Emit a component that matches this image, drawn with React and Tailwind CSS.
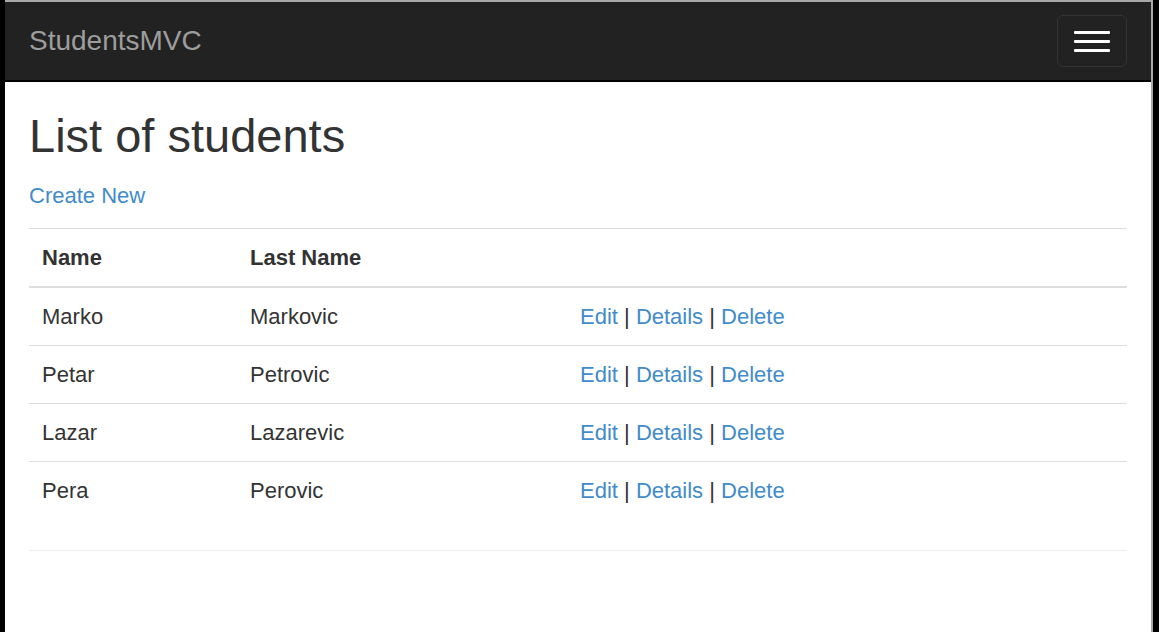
export default function App() {
  const rows = [
    ["Marko", "Markovic"],
    ["Petar", "Petrovic"],
    ["Lazar", "Lazarevic"],
    ["Pera", "Perovic"],
  ];
  return (
    <div className="h-[632px] w-[1159px] bg-black pl-[5px] overflow-hidden font-[family-name:'Liberation_Sans',Arial,sans-serif]">
      <div className="h-full w-[1148px] bg-white border-r-2 border-t-2 border-[#a8a8a8] flex flex-col">
        <nav className="h-[80px] shrink-0 bg-[#222] border-b-2 border-black flex items-center justify-between px-6">
          <span className="text-[28px] text-[#9d9d9d] leading-none">StudentsMVC</span>
          <button className="w-[70px] h-[52px] border border-[#333] rounded-[6px] flex flex-col items-center justify-center gap-[6px]">
            <span className="block w-[36px] h-[3px] bg-white rounded-[1px]"></span>
            <span className="block w-[36px] h-[3px] bg-white rounded-[1px]"></span>
            <span className="block w-[36px] h-[3px] bg-white rounded-[1px]"></span>
          </button>
        </nav>
        <main className="px-6">
          <h1 className="mt-[29px] text-[47px] leading-[50px] text-[#333]">List of students</h1>
          <div className="mt-[21px] text-[22px] leading-[28px]">
            <a className="text-[#428bca]">Create New</a>
          </div>
          <div className="mt-[18px] text-[22px] text-[#333]">
            <div className="flex items-center h-[60px] border-t border-b-2 border-[#ddd] font-bold">
              <div className="w-[208px] pl-[13px]">Name</div>
              <div className="w-[330px] pl-[13px]">Last Name</div>
              <div className="flex-1"></div>
            </div>
            {rows.map((r, i) => (
              <div
                key={r[0]}
                className={i === 0 ? "flex items-center h-[57px]" : "flex items-center h-[58px] border-t border-[#ddd]"}
              >
                <div className="w-[208px] pl-[13px]">{r[0]}</div>
                <div className="w-[330px] pl-[13px]">{r[1]}</div>
                <div className="flex-1 pl-[13px]">
                  <a className="text-[#428bca]">Edit</a> | <a className="text-[#428bca]">Details</a> |{" "}
                  <a className="text-[#428bca]">Delete</a>
                </div>
              </div>
            ))}
          </div>
          <hr className="mt-[31px] border-0 border-t border-[#eee]" />
        </main>
      </div>
    </div>
  );
}
